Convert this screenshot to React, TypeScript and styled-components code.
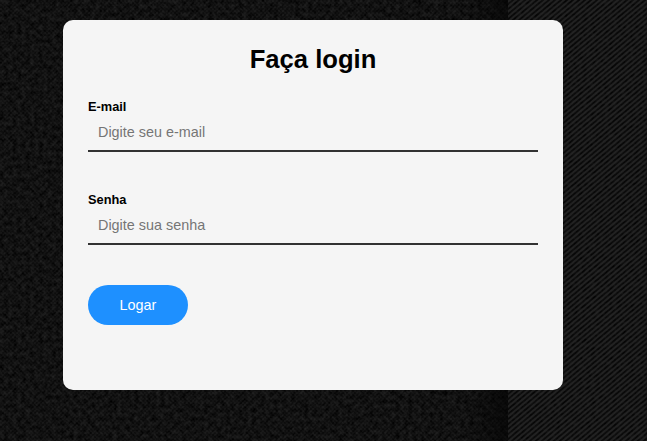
import React from "react";
import styled, { createGlobalStyle } from "styled-components";

const GlobalStyle = createGlobalStyle`
  * { box-sizing: border-box; }
  body {
    margin: 0;
    background: #0d0d0d;
    font-family: "Liberation Sans", Arial, sans-serif;
    overflow: hidden;
  }
`;

const Page = styled.main`
  position: relative;
  isolation: isolate;
  display: flex;
  align-items: flex-start;
  height: 441px;
  padding: 20px 0 0 63px;
`;

const Fabric = styled.svg`
  position: absolute;
  inset: 0;
  z-index: -1;
  width: 100%;
  height: 100%;
`;

const Card = styled.form`
  width: 500px;
  height: 370px;
  padding: 24px 25px;
  border-radius: 10px;
  background: #f5f5f5;
`;

const Title = styled.h1`
  margin: 0 0 25px;
  font-size: 25.6px;
  line-height: 30px;
  text-align: center;
  color: #000;
`;

const Field = styled.div`
  display: flex;
  flex-direction: column;
  height: 53px;
  margin-bottom: 40px;
`;

const Label = styled.label`
  font-size: 12.8px;
  line-height: 15px;
  font-weight: bold;
  color: #000;
`;

const Input = styled.input`
  width: 100%;
  height: 38px;
  padding: 0 10px;
  border: 0;
  border-bottom: 2px solid #323232;
  outline: 0;
  background: transparent;
  font: 14.4px "Liberation Sans", Arial, sans-serif;

  &::placeholder {
    color: #757575;
    opacity: 1;
  }
`;

const Button = styled.button`
  display: block;
  width: 100px;
  height: 40px;
  padding: 0;
  border: 0;
  border-radius: 20px;
  background: #1e90ff;
  color: #fff;
  font: 14.4px "Liberation Sans", Arial, sans-serif;
`;

const FabricTexture = () => (
  <Fabric aria-hidden="true">
    <defs>
      <filter id="grain" x="0" y="0" width="100%" height="100%" colorInterpolationFilters="sRGB">
        <feTurbulence type="fractalNoise" baseFrequency="0.23" numOctaves="3" seed="8" />
        <feColorMatrix values="0.15 0 0 0 -0.018  0.15 0 0 0 -0.018  0.15 0 0 0 -0.018  0 0 0 0 1" />
      </filter>
      <pattern id="weave" width="4" height="4" patternUnits="userSpaceOnUse">
        <path d="M0 0h2v2h2v2h-2v-2h-2z" fill="#fff" fillOpacity="0.025" />
      </pattern>
      <pattern id="twill" width="6" height="5" patternUnits="userSpaceOnUse">
        <path d="M-6 5L6 -5M0 5L6 0M0 10L12 0" stroke="#292929" strokeWidth="2" />
      </pattern>
      <linearGradient id="fold">
        <stop offset="0" stopColor="#030303" stopOpacity="0" />
        <stop offset="1" stopColor="#030303" stopOpacity="0.6" />
      </linearGradient>
    </defs>
    <rect width="100%" height="100%" filter="url(#grain)" />
    <rect width="508" height="100%" fill="url(#weave)" />
    <rect x="465" width="43" height="100%" fill="url(#fold)" />
    <rect x="508" width="139" height="100%" fill="#080808" fillOpacity="0.4" />
    <rect x="508" width="139" height="100%" fill="url(#twill)" opacity="0.75" />
  </Fabric>
);

const fields = [
  { id: "email", type: "email", label: "E-mail", placeholder: "Digite seu e-mail" },
  { id: "senha", type: "password", label: "Senha", placeholder: "Digite sua senha" },
];

export default function App() {
  return (
    <>
      <GlobalStyle />
      <Page>
        <FabricTexture />
        <Card>
          <Title>Faça login</Title>
          {fields.map(({ label, ...input }) => (
            <Field key={input.id}>
              <Label htmlFor={input.id}>{label}</Label>
              <Input {...input} />
            </Field>
          ))}
          <Button type="button">Logar</Button>
        </Card>
      </Page>
    </>
  );
}
